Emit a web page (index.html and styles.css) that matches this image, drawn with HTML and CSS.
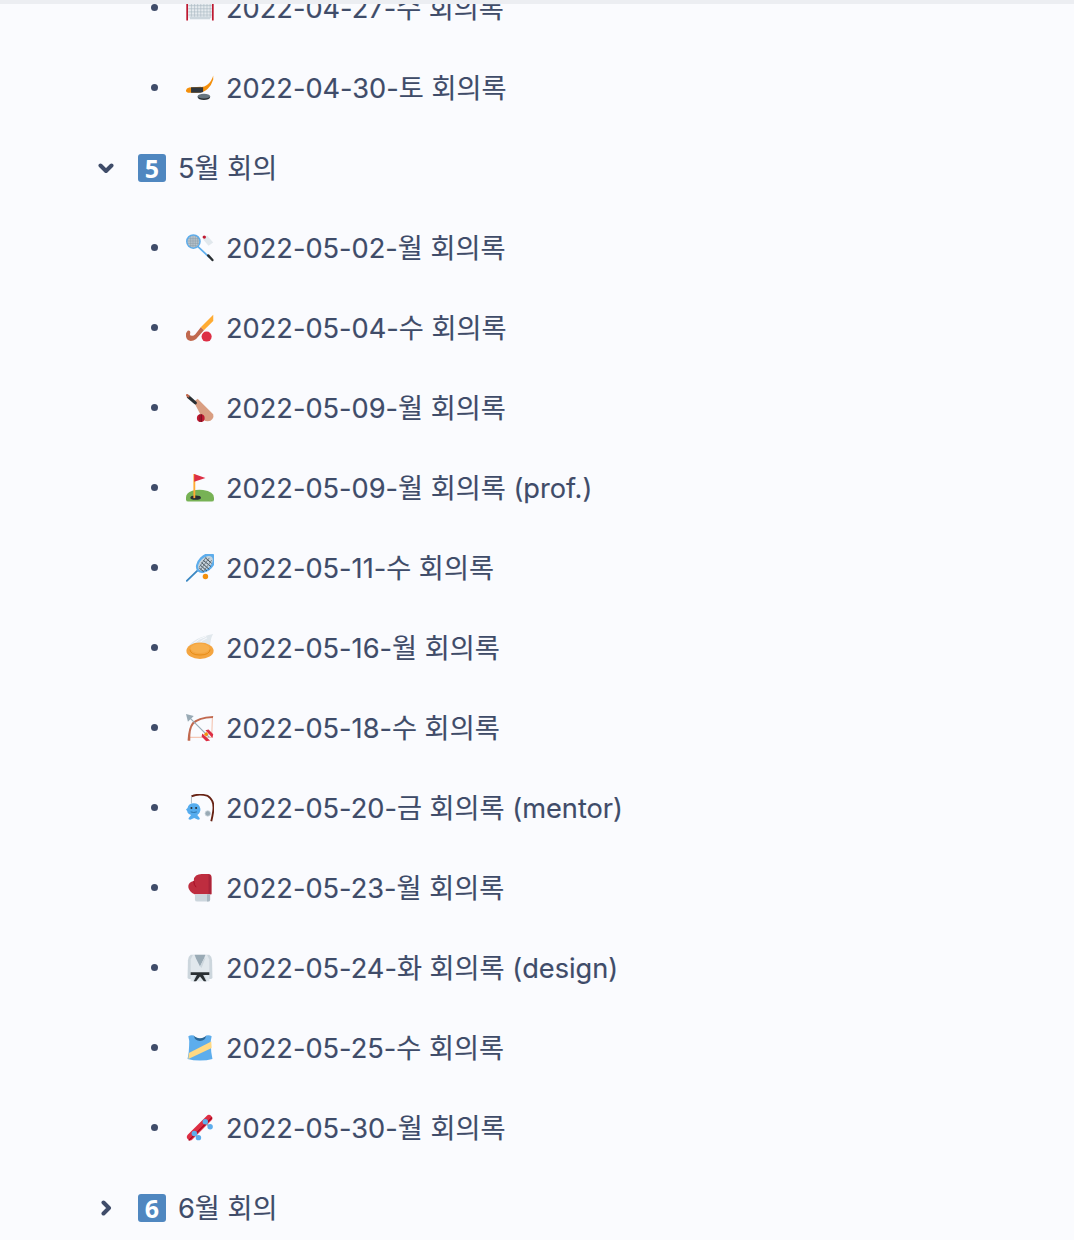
FILE: index.html
```html
<!DOCTYPE html>
<html lang="ko">
<head>
<meta charset="utf-8">
<title>회의록</title>
<link rel="stylesheet" href="styles.css">
</head>
<body>
<div class="top-edge"></div>
<ul class="tree">
  <li class="row page"><span class="bullet"></span>
    <svg class="emoji" viewBox="0 0 36 36"><path fill="#e6ebef" d="M3 3h30v28H3z"/><path stroke="#aab8c2" stroke-width=".8" fill="none" d="M3 7h30M3 11h30M3 15h30M3 19h30M3 23h30M3 27h30M7 3v28M11 3v28M15 3v28M19 3v28M23 3v28M27 3v28M31 3v28"/><path fill="#ccd6dd" d="M5 29h26v3.500H5z"/><path fill="none" stroke="#be1931" stroke-width="2.200" d="M1.500 34V5q0-3 3-3h27q3 0 3 3v29"/></svg>
    <span class="label">2022-04-27-수 회의록</span></li>
  <li class="row page"><span class="bullet"></span>
    <svg class="emoji" viewBox="0 0 36 36"><path fill="#f4900c" d="M35 2q-2 8-8 12-4 3-8 2.500L4 17.500q-3.500 1-4 3.500t2.500 3H15q9-.5 13-5 5-5 7-12z"/><path fill="#31373d" d="M6.500 17h15.500v6l-3 1H6.500z"/><ellipse cx="23" cy="30" rx="8" ry="3.500" fill="#292f33"/><ellipse cx="23" cy="28.500" rx="8" ry="3" fill="#66757f"/></svg>
    <span class="label">2022-04-30-토 회의록</span></li>

  <li class="row group"><svg class="chevron" viewBox="0 0 16 16"><path d="M2.500 5.500 8 11l5.500-5.500"/></svg>
    <span class="badge">5</span>
    <span class="label">5월 회의</span></li>

  <li class="row page"><span class="bullet"></span>
    <svg class="emoji" viewBox="0 0 36 36"><path fill="#e1e8ed" d="m22 7 5-5 8 9-6 4z"/><circle cx="23.500" cy="4" r="2.200" fill="#be1931"/><path stroke="#5dadec" stroke-width="2.200" d="m14 15 16 15"/><path stroke="#292f33" stroke-width="3" stroke-linecap="round" d="m28.500 27.500 5.500 6"/><circle cx="9.500" cy="9.700" r="8.500" fill="#b8c4cd" stroke="#5dadec" stroke-width="2"/><path stroke="#8899a6" stroke-width=".7" d="M3 6h13M2 9h15M2 12h15M4 15h11M6 3v14M9 2v15M12 2v15M15 4v10"/></svg>
    <span class="label">2022-05-02-월 회의록</span></li>
  <li class="row page"><span class="bullet"></span>
    <svg class="emoji" viewBox="0 0 36 36"><path fill="#ffac33" d="M35 1v8L23 21l-4-4z"/><path fill="#c1694f" d="m19 17 4 4-10 11q-4 3-8 2.500T0 29q-1-3 1-6t4-1q1 2 0 4 0 2 3 2 2 0 4-2z"/><circle cx="26.500" cy="29" r="6.500" fill="#dd2e44"/></svg>
    <span class="label">2022-05-04-수 회의록</span></li>
  <li class="row page"><span class="bullet"></span>
    <svg class="emoji" viewBox="0 0 36 36"><path fill="#d99e82" d="m10 10 5-4 20 20q1 3-1 6-2 3-6 3-3 0-6-2z"/><path stroke="#292f33" stroke-width="4" stroke-linecap="round" d="m3 3.500 9 8"/><path stroke="#c1694f" stroke-width="3" stroke-linecap="round" d="m1.500 1.500 1.500 1.500"/><circle cx="19" cy="31" r="5" fill="#be1931"/><path stroke="#7b1020" stroke-width="1.200" d="M18 26v10M20 26v10"/></svg>
    <span class="label">2022-05-09-월 회의록</span></li>
  <li class="row page"><span class="bullet"></span>
    <svg class="emoji" viewBox="0 0 36 36"><path fill="#77b255" d="M0 33v-3q0-6 8-8.500 7-2 14-1 14 2 14 10v2.500q0 2.500-3 2.500H3q-3 0-3-2.500z"/><ellipse cx="12.400" cy="30.400" rx="6.800" ry="2.600" fill="#292f33"/><path fill="#ffac33" d="M9.500 0h2.400v31H9.500z"/><path fill="#dd2e44" d="m10.500 0 14.500 5-14.500 5z"/></svg>
    <span class="label">2022-05-09-월 회의록 (prof.)</span></li>
  <li class="row page"><span class="bullet"></span>
    <svg class="emoji" viewBox="0 0 36 36"><path stroke="#3b88c3" stroke-width="2.400" stroke-linecap="round" d="M1 34.500 16 20"/><ellipse cx="25.500" cy="11.500" rx="15" ry="10" transform="rotate(-45 25.500 11.500)" fill="#5dadec"/><ellipse cx="25" cy="12" rx="11.500" ry="7" transform="rotate(-45 25 12)" fill="#c5d3dc"/><path stroke="#31373d" stroke-width="1.100" d="m18 14 9 8M20 11l10 9M22 8l10 8M25 5l8 7M17 18l6 5"/><path stroke="#66757f" stroke-width="1.100" d="M30 5 18 21M33 8 22 23M26 4 17 17"/><circle cx="25" cy="29" r="3.500" fill="#f4900c"/></svg>
    <span class="label">2022-05-11-수 회의록</span></li>
  <li class="row page"><span class="bullet"></span>
    <svg class="emoji" viewBox="0 0 36 36"><path fill="#e1e8ed" d="M3 16Q10 5 35 0q-3 4-4 14z"/><path stroke="#fafbfe" stroke-width="1.200" fill="none" d="M10 12q6-6 16-9M17 12q3-4 10-7"/><ellipse cx="18" cy="21.500" rx="17.500" ry="10.500" fill="#f4a540"/><path fill="none" stroke="#e58b12" stroke-width="1.200" d="M5 20q1 7 13 7t13-7"/><ellipse cx="18" cy="18.500" rx="12" ry="6" fill="#f7b04e"/></svg>
    <span class="label">2022-05-16-월 회의록</span></li>
  <li class="row page"><span class="bullet"></span>
    <svg class="emoji" viewBox="0 0 36 36"><path fill="none" stroke="#f4c7b5" stroke-width="1.500" d="M34 4 33 30H4"/><path fill="#c1694f" d="M3 34.500 2 34Q3 17 8 11 14 4 35 2.500l-.5 2.500q-18 .5-24.500 8-5 6-4.500 21.500z"/><path stroke="#99aab5" stroke-width="1.500" d="M3 3l27 27"/><path fill="#99aab5" d="m0 0 10 2.500L2.500 10z"/><path fill="#dd2e44" d="m25 21 4-1 6 6-1 5zM21 25l-1 4 6 6 5-1z"/><path fill="#f4900c" d="m26 23 3 3-3 3-3-3z"/></svg>
    <span class="label">2022-05-18-수 회의록</span></li>
  <li class="row page"><span class="bullet"></span>
    <svg class="emoji" viewBox="0 0 36 36"><path fill="none" stroke="#662113" stroke-width="2.400" d="M7 3q10-4 21-.5Q37 8 35 22q-1 7-2.500 13"/><path fill="none" stroke="#99aab5" d="M7 3v9"/><circle cx="28" cy="25" r="3.500" fill="#99aab5" stroke="#ccd6dd"/><path fill="#55acee" d="M10 12q7 0 8.500 7 .5 5-4 8l3 4q1 2-2 2l-5-2-5 2q-3 0-2-2l3-4Q2 26 1.500 22L0 20l2-2q1-6 8-6z"/><circle cx="7" cy="18" r="1.300" fill="#292f33"/><circle cx="13" cy="18" r="1.300" fill="#292f33"/><path stroke="#226699" fill="none" d="M6 23q4 1.500 8 0"/></svg>
    <span class="label">2022-05-20-금 회의록 (mentor)</span></li>
  <li class="row page"><span class="bullet"></span>
    <svg class="emoji" viewBox="0 0 36 36"><path fill="#be2d3f" d="M11 26q-7-3-8-9-.5-5 4-7l3-1q0-5 3-7 3-2 7-2h9q4 0 4 5v21z"/><path fill="#a8243a" d="M29 .3q3 .7 3 4.700v21h-3z"/><path fill="none" stroke="#a0041e" d="M10 9q0 5 3 8"/><path fill="#ccd6dd" d="M11.500 26H31v7q0 2.500-3 2.500H14.500q-3 0-3-2.500z"/><path fill="#aab8c2" d="M27 26h4v7q0 2.500-3 2.500h-1z"/></svg>
    <span class="label">2022-05-23-월 회의록</span></li>
  <li class="row page"><span class="bullet"></span>
    <svg class="emoji" viewBox="0 0 36 36"><path fill="#ccd6dd" d="M10 1H6Q3 3 2.500 8L2 30q0 2 2 2h5z"/><path fill="#ccd6dd" d="M26 1h4q3 2 3.500 7l.5 22q0 2-2 2h-5z"/><path fill="#e1e8ed" d="M9 1h18l3 6v28H6V7z"/><path fill="#99aab5" d="M11 1h14l-2 5-5 10-5-10z"/><path fill="#ccd6dd" d="M18 16 23 6l2-1-5 13zM9 35l3-8h3l-3 8zM24 27h-3l3 8h3z"/><path fill="#292f33" d="M6 23.500h24v3.500h-8l4 8h-3l-5-6-5 6h-3l4-8H6z"/></svg>
    <span class="label">2022-05-24-화 회의록 (design)</span></li>
  <li class="row page"><span class="bullet"></span>
    <svg class="emoji" viewBox="0 0 36 36"><path fill="#5dadec" d="M3 3q3-2 7-1 1 5 8 5t8-5q4-1 7 1-2 7-1 12 0 8 2 17-7 2-16 2T2 32q2-9 2-17 1-5-1-12z"/><path fill="#2a6797" d="M10 2q1 7 8 7t8-7q-2 3-8 3.500Q12 5 10 2z"/><path fill="#ffd983" d="M32.500 9.500l.5 8.500L3 32l.7-7.500z"/></svg>
    <span class="label">2022-05-25-수 회의록</span></li>
  <li class="row page"><span class="bullet"></span>
    <svg class="emoji" viewBox="0 0 36 36"><path stroke="#dd2e44" stroke-width="8.500" stroke-linecap="round" d="M5.500 29.500 29.500 5.500"/><path stroke="#a0041e" stroke-width="1.500" stroke-linecap="round" d="M4 33.500 33 5"/><path stroke="#99aab5" stroke-width="2" d="m24 10 7 7M10 25l7 6"/><circle cx="24.800" cy="10" r="3.500" fill="#5dadec"/><circle cx="31" cy="16.300" r="3.500" fill="#5dadec"/><circle cx="10.700" cy="25" r="3.500" fill="#5dadec"/><circle cx="16" cy="30.400" r="3.500" fill="#5dadec"/></svg>
    <span class="label">2022-05-30-월 회의록</span></li>

  <li class="row group"><svg class="chevron" viewBox="0 0 16 16"><path d="M5.500 2.500 11 8l-5.500 5.500"/></svg>
    <span class="badge">6</span>
    <span class="label">6월 회의</span></li>
</ul>
</body>
</html>
```

FILE: styles.css
```css
html, body {
  margin: 0;
  padding: 0;
  height: 100%;
  overflow: hidden;
  background: #fafbfe;
}

body {
  color: #3f4c69;
  font-family: Inter, "Noto Sans CJK KR", sans-serif;
  font-size: 27.200px;
}

.top-edge {
  position: fixed;
  top: 0;
  left: 0;
  right: 0;
  height: 4px;
  background: #eceef2;
}

.tree {
  list-style: none;
  margin: -32px 0 0;
  padding: 0 0 0 98px;
}

.row {
  display: flex;
  align-items: center;
  height: 80px;
}

.page {
  padding-left: 53px;
}

.bullet {
  width: 7px;
  height: 7px;
  border-radius: 50%;
  background: #3f4c69;
  margin: 0 28px 1px 0;
  flex: none;
}

.emoji {
  width: 28px;
  height: 28px;
  flex: none;
  margin-right: 12px;
}

.chevron {
  width: 16px;
  height: 16px;
  flex: none;
  margin-right: 24px;
  fill: none;
  stroke: #3f4c69;
  stroke-width: 4;
  stroke-linecap: round;
  stroke-linejoin: round;
}

.badge {
  width: 28px;
  height: 28px;
  flex: none;
  margin-right: 12px;
  border-radius: 3px;
  background: #4f87c0;
  color: #fff;
  font-family: "Open Sans", sans-serif;
  font-weight: 700;
  font-size: 25px;
  line-height: 28px;
  text-align: center;
}

.label {
  white-space: nowrap;
  margin-bottom: 4px;
  -webkit-text-stroke: 0.15px #3f4c69;
}
```
